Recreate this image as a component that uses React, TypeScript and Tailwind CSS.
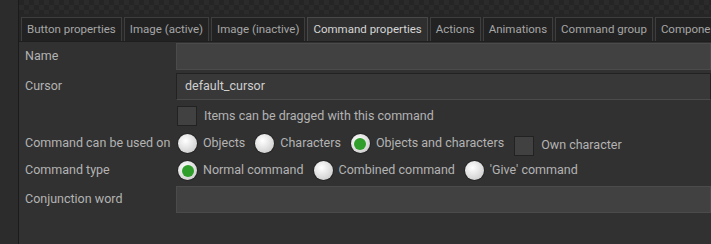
import React from "react";

const TABS = [
  "Button properties",
  "Image (active)",
  "Image (inactive)",
  "Command properties",
  "Actions",
  "Animations",
  "Command group",
  "Components",
];

const Radio = ({ checked }: { checked?: boolean }) => (
  <span className="flex size-[19px] shrink-0 items-center justify-center rounded-full bg-[radial-gradient(circle_at_40%_35%,#ffffff,#d4d4d4_70%,#b8b8b8)] shadow-[0_0_0_1px_#262626]">
    {checked && <span className="size-[12px] rounded-full bg-[#2f9e2a]" />}
  </span>
);

const Check = () => (
  <span className="size-[20px] shrink-0 border border-[#222] bg-[#414141]" />
);

const Option = ({ label, checked }: { label: string; checked?: boolean }) => (
  <div className="flex items-center gap-[6px] whitespace-nowrap">
    <Radio checked={checked} />
    <span>{label}</span>
  </div>
);

const Label = ({ children }: { children: React.ReactNode }) => (
  <div className="flex items-center whitespace-nowrap pl-[6px]">{children}</div>
);

export default function App() {
  return (
    <div
      className="flex h-[244px] w-[711px] overflow-hidden bg-[#313131] text-[12.5px] text-[#b3b3b3]"
      style={{ fontFamily: "Roboto, 'Liberation Sans', sans-serif" }}
    >
      <div className="w-[19px] shrink-0 border-r border-[#1b1b1b] bg-[#2c2c2c]" />
      <div className="flex min-w-0 flex-1 flex-col">
        <div className="h-[14px] bg-[repeating-conic-gradient(#2b2b2b_0_25%,#252525_0_50%)] bg-[length:10px_10px]" />
        <div className="h-[3px] bg-[#262626]" />
        <div className="flex h-[25px] gap-[2px] overflow-hidden border-b border-[#1e1e1e] bg-[#262626] pl-[2px] text-[11.5px]">
          {TABS.map((t) => (
            <div
              key={t}
              className={
                t === "Command properties"
                  ? "flex shrink-0 items-center border border-b-0 border-[#484848] bg-[#2f2f2f] px-[5px] text-[#d6d6d6]"
                  : "flex shrink-0 items-center border border-b-0 border-[#3e3e3e] bg-[#222222] px-[5px] text-[#a6a6a6]"
              }
            >
              {t}
            </div>
          ))}
        </div>
        <div className="grid grid-cols-[157px_1fr] pt-[1px]">
          <Label>Name</Label>
          <div className="h-[27px] border border-[#4b4b4b] bg-[#414141]" />

          <div className="h-[3px]" />
          <div className="h-[3px]" />

          <Label>Cursor</Label>
          <div className="flex h-[27px] items-center border border-[#222] border-b-[#4b4b4b] bg-[#383838] pl-[8px] text-[#cfcfcf]">
            default_cursor
          </div>

          <div />
          <div className="flex h-[30px] items-center gap-[7px] pl-[1px] pt-[2px]">
            <Check />
            <span>Items can be dragged with this command</span>
          </div>

          <Label>Command can be used on</Label>
          <div className="flex h-[27px] items-center gap-[10px] pl-[2px]">
            <Option label="Objects" />
            <Option label="Characters" />
            <Option label="Objects and characters" checked />
            <div className="flex items-center gap-[7px] whitespace-nowrap pt-[4px]">
              <Check />
              <span>Own character</span>
            </div>
          </div>

          <Label>Command type</Label>
          <div className="flex h-[27px] items-center gap-[10px] pl-[2px]">
            <Option label="Normal command" checked />
            <Option label="Combined command" />
            <Option label="'Give' command" />
          </div>

          <div className="h-[2px]" />
          <div className="h-[2px]" />

          <Label>Conjunction word</Label>
          <div className="h-[27px] border border-[#4b4b4b] bg-[#414141]" />
        </div>
      </div>
    </div>
  );
}
